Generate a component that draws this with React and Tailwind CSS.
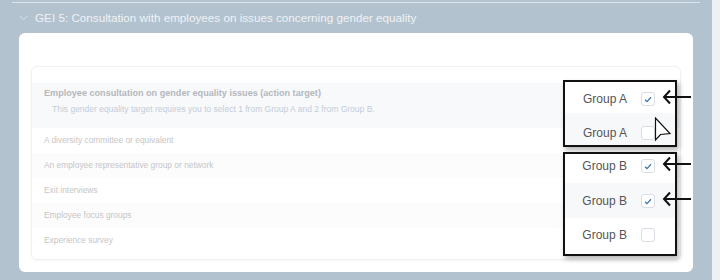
const rows = [
  'A diversity committee or equivalent',
  'An employee representative group or network',
  'Exit interviews',
  'Employee focus groups',
  'Experience survey',
]

function Check({ checked }) {
  return (
    <span className="w-[14px] h-[14px] rounded-[3px] border border-[#d9dee4] bg-white flex items-center justify-center">
      {checked && (
        <svg width="8" height="7" viewBox="0 0 8 7">
          <path d="M1 3.8 L3 5.6 L7 1.2" fill="none" stroke="#3f78b3" strokeWidth="1.3" />
        </svg>
      )}
    </span>
  )
}

function GroupRow({ label, checked, shaded, className }) {
  return (
    <div className={`flex items-start justify-end pr-[20px] ${shaded ? 'bg-[#f7f8fa]' : 'bg-white'} ${className}`}>
      <div className="flex items-center gap-[14px]">
        <span className="text-[12px] text-[#555]">{label}</span>
        <Check checked={checked} />
      </div>
    </div>
  )
}

function Arrow({ top }) {
  return (
    <svg className="absolute left-[662px]" style={{ top: top - 8 }} width="30" height="16" viewBox="0 0 30 16">
      <path d="M29 8 H2 M8 1.5 L2 8 L8 14.5" fill="none" stroke="#111" strokeWidth="2" />
    </svg>
  )
}

export default function App() {
  return (
    <div className="relative w-[720px] h-[280px] flex bg-[#b3c2cf] overflow-hidden" style={{ fontFamily: '"Liberation Sans", Arial, sans-serif' }}>
      <div className="w-[712px] flex flex-col">
        <div className="mt-[2px] mx-[12px] h-px bg-[#dde4ea]" />
        <div className="h-[30px] flex items-center gap-[7px] pl-[19px]">
          <svg width="9" height="6" viewBox="0 0 9 6">
            <path d="M0.5 0.8 L4.5 4.8 L8.5 0.8" fill="none" stroke="#dbe3ea" strokeWidth="1" />
          </svg>
          <span className="text-[11.7px] text-[#eef2f5]">GEI 5: Consultation with employees on issues concerning gender equality</span>
        </div>
        <div className="ml-[19px] w-[674px] h-[239px] bg-white rounded-md pt-[33px] px-3 pb-3">
          <div className="h-full border border-[#eef0f2] rounded-md shadow-[0_1px_3px_rgba(0,0,0,0.04)] pt-[16px]">
            <div className="h-[45px] bg-[#f8f9fb] pl-3 pt-[4px] flex flex-col">
              <span className="text-[9.1px] leading-[12px] font-bold text-[#b4b7bb]">Employee consultation on gender equality issues (action target)</span>
              <span className="mt-[4px] pl-2 text-[8.5px] leading-[12px] text-[#c3cdd8]">This gender equality target requires you to select 1 from Group A and 2 from Group B.</span>
            </div>
            {rows.map((r, i) => (
              <div key={i} className={`h-[25px] flex items-center pl-3 text-[8.4px] text-[#c6c6c6] ${i % 2 ? 'bg-[#fcfcfd]' : 'bg-white'}`}>
                {r}
              </div>
            ))}
          </div>
        </div>
      </div>
      <div className="flex-1 bg-[#eef1f4]" />

      <div className="absolute left-[563px] top-[80px] w-[114px] h-[67px] border-2 border-[#111] bg-white flex flex-col shadow-[2px_3px_5px_rgba(0,0,0,0.3)]">
        <GroupRow label="Group A" checked className="h-[31px] pt-[8px]" />
        <GroupRow label="Group A" shaded className="flex-1 pt-[11px]" />
      </div>
      <div className="absolute left-[563px] top-[152px] w-[114px] h-[104px] border-2 border-[#111] bg-white flex flex-col shadow-[2px_3px_5px_rgba(0,0,0,0.3)]">
        <GroupRow label="Group B" checked className="h-[29px] pt-[3px]" />
        <GroupRow label="Group B" checked shaded className="h-[35px] pt-[9px]" />
        <GroupRow label="Group B" className="flex-1 pt-[8px]" />
      </div>

      <Arrow top={97} />
      <Arrow top={164} />
      <Arrow top={199} />

      <svg className="absolute left-[654px] top-[117px]" width="18" height="25" viewBox="0 0 18 25">
        <path d="M1.5 1 L1.5 23 L6.5 17.5 L16 16.5 Z" fill="#fff" stroke="#111" strokeWidth="1.2" strokeLinejoin="miter" />
      </svg>
    </div>
  )
}
